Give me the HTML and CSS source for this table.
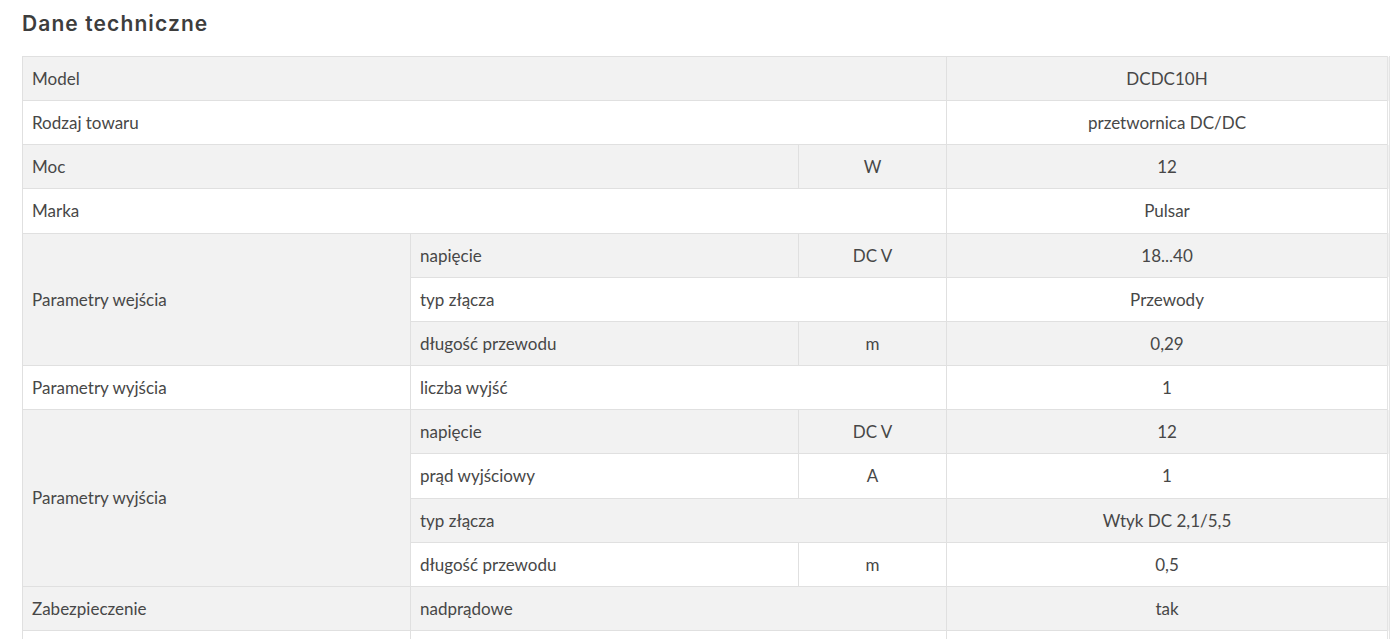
FILE: index.html
```html
<!DOCTYPE html>
<html lang="pl">
<head>
<meta charset="utf-8">
<title>Dane techniczne</title>
<link rel="stylesheet" href="styles.css">
</head>
<body>
<section class="specs">
  <h2 class="specs-title">Dane techniczne</h2>
  <table class="spec-table">
    <colgroup>
      <col class="c1"><col class="c2"><col class="c3"><col class="c4">
    </colgroup>
    <tbody>
      <tr class="g"><td colspan="3">Model</td><td class="val">DCDC10H</td></tr>
      <tr><td colspan="3">Rodzaj towaru</td><td class="val">przetwornica DC/DC</td></tr>
      <tr class="g"><td colspan="2">Moc</td><td class="unit">W</td><td class="val">12</td></tr>
      <tr><td colspan="3">Marka</td><td class="val">Pulsar</td></tr>
      <tr class="g"><td rowspan="3" class="g">Parametry wejścia</td><td>napięcie</td><td class="unit">DC V</td><td class="val">18...40</td></tr>
      <tr><td colspan="2">typ złącza</td><td class="val">Przewody</td></tr>
      <tr class="g"><td>długość przewodu</td><td class="unit">m</td><td class="val">0,29</td></tr>
      <tr><td>Parametry wyjścia</td><td colspan="2">liczba wyjść</td><td class="val">1</td></tr>
      <tr class="g"><td rowspan="4" class="g">Parametry wyjścia</td><td>napięcie</td><td class="unit">DC V</td><td class="val">12</td></tr>
      <tr><td>prąd wyjściowy</td><td class="unit">A</td><td class="val">1</td></tr>
      <tr class="g"><td colspan="2">typ złącza</td><td class="val">Wtyk DC 2,1/5,5</td></tr>
      <tr><td>długość przewodu</td><td class="unit">m</td><td class="val">0,5</td></tr>
      <tr class="g"><td>Zabezpieczenie</td><td colspan="2">nadprądowe</td><td class="val">tak</td></tr>
      <tr><td>&nbsp;</td><td colspan="2">&nbsp;</td><td class="val">&nbsp;</td></tr>
    </tbody>
  </table>
</section>
</body>
</html>
```
FILE: styles.css
```css
html, body {
  margin: 0;
  padding: 0;
  background: #ffffff;
}
body {
  font-family: Lato, "Liberation Sans", sans-serif;
  color: #474747;
}
.specs {
  padding: 11px 11px 0 22px;
}
.specs-title {
  margin: 0 0 19px 0;
  font-family: Inter, "Open Sans", sans-serif;
  font-weight: 600;
  font-size: 21px;
  line-height: 26px;
  color: #3d3d3d;
  letter-spacing: 1.1px;
}
.spec-table {
  width: 1368px;
  border-collapse: collapse;
  table-layout: fixed;
  font-size: 17px;
  border-right: 3px double #e4e4e4;
}
.c1 { width: 388px; }
.c2 { width: 388px; }
.c3 { width: 148px; }
.c4 { width: auto; }
.spec-table td {
  border: 1px solid #e0e0e0;
  padding: 11px 9px 11px 9px;
  line-height: 21.15px;
  vertical-align: middle;
  background: #ffffff;
}
.spec-table tr.g td,
.spec-table td.g {
  background: #f2f2f2;
}
.spec-table td.unit,
.spec-table td.val {
  text-align: center;
}
```
